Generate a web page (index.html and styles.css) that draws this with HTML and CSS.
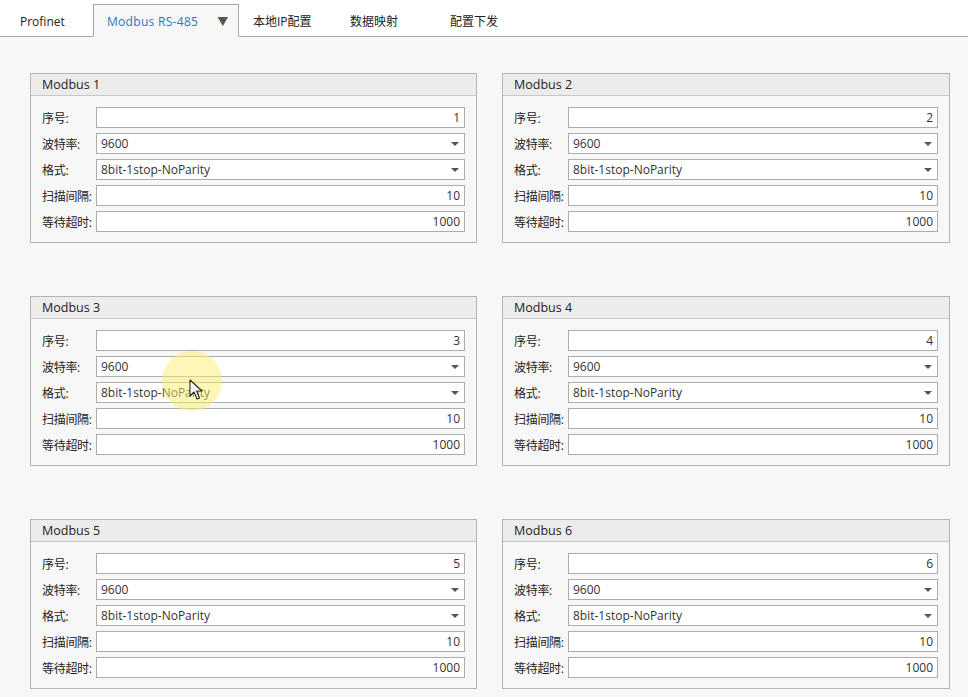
FILE: index.html
```html
<!DOCTYPE html>
<html lang="zh">
<head>
<meta charset="utf-8">
<title>Modbus RS-485</title>
<link rel="stylesheet" href="styles.css">
</head>
<body>
<div class="tabs">
  <div class="tab t-prof">Profinet</div>
  <div class="tab active">Modbus RS-485<span class="tab-caret">&#9660;</span></div>
  <div class="tab t-ip">本地IP配置</div>
  <div class="tab t-map">数据映射</div>
  <div class="tab t-dl">配置下发</div>
</div>
<div class="content">
  <div class="grid">
    <section class="panel">
      <div class="panel-head">Modbus 1</div>
      <div class="panel-body">
        <div class="row"><span class="lbl">序号:</span><div class="field num">1</div></div>
        <div class="row"><span class="lbl">波特率:</span><div class="field sel">9600<span class="arr"></span></div></div>
        <div class="row"><span class="lbl">格式:</span><div class="field sel">8bit-1stop-NoParity<span class="arr"></span></div></div>
        <div class="row"><span class="lbl">扫描间隔:</span><div class="field num">10</div></div>
        <div class="row"><span class="lbl">等待超时:</span><div class="field num">1000</div></div>
      </div>
    </section>
    <section class="panel">
      <div class="panel-head">Modbus 2</div>
      <div class="panel-body">
        <div class="row"><span class="lbl">序号:</span><div class="field num">2</div></div>
        <div class="row"><span class="lbl">波特率:</span><div class="field sel">9600<span class="arr"></span></div></div>
        <div class="row"><span class="lbl">格式:</span><div class="field sel">8bit-1stop-NoParity<span class="arr"></span></div></div>
        <div class="row"><span class="lbl">扫描间隔:</span><div class="field num">10</div></div>
        <div class="row"><span class="lbl">等待超时:</span><div class="field num">1000</div></div>
      </div>
    </section>
    <section class="panel">
      <div class="panel-head">Modbus 3</div>
      <div class="panel-body">
        <div class="row"><span class="lbl">序号:</span><div class="field num">3</div></div>
        <div class="row"><span class="lbl">波特率:</span><div class="field sel">9600<span class="arr"></span></div></div>
        <div class="row"><span class="lbl">格式:</span><div class="field sel">8bit-1stop-NoParity<span class="arr"></span></div></div>
        <div class="row"><span class="lbl">扫描间隔:</span><div class="field num">10</div></div>
        <div class="row"><span class="lbl">等待超时:</span><div class="field num">1000</div></div>
      </div>
      <div class="pointer">
        <span class="halo"></span>
        <svg class="cursor" width="14" height="22" viewBox="0 0 14 22"><path d="M1 1 L1 17 L5 13 L8 20 L10.5 19 L7.5 12 L13 12 Z" fill="#fff" stroke="#222" stroke-width="1.1" stroke-linejoin="round"/></svg>
      </div>
    </section>
    <section class="panel">
      <div class="panel-head">Modbus 4</div>
      <div class="panel-body">
        <div class="row"><span class="lbl">序号:</span><div class="field num">4</div></div>
        <div class="row"><span class="lbl">波特率:</span><div class="field sel">9600<span class="arr"></span></div></div>
        <div class="row"><span class="lbl">格式:</span><div class="field sel">8bit-1stop-NoParity<span class="arr"></span></div></div>
        <div class="row"><span class="lbl">扫描间隔:</span><div class="field num">10</div></div>
        <div class="row"><span class="lbl">等待超时:</span><div class="field num">1000</div></div>
      </div>
    </section>
    <section class="panel">
      <div class="panel-head">Modbus 5</div>
      <div class="panel-body">
        <div class="row"><span class="lbl">序号:</span><div class="field num">5</div></div>
        <div class="row"><span class="lbl">波特率:</span><div class="field sel">9600<span class="arr"></span></div></div>
        <div class="row"><span class="lbl">格式:</span><div class="field sel">8bit-1stop-NoParity<span class="arr"></span></div></div>
        <div class="row"><span class="lbl">扫描间隔:</span><div class="field num">10</div></div>
        <div class="row"><span class="lbl">等待超时:</span><div class="field num">1000</div></div>
      </div>
    </section>
    <section class="panel">
      <div class="panel-head">Modbus 6</div>
      <div class="panel-body">
        <div class="row"><span class="lbl">序号:</span><div class="field num">6</div></div>
        <div class="row"><span class="lbl">波特率:</span><div class="field sel">9600<span class="arr"></span></div></div>
        <div class="row"><span class="lbl">格式:</span><div class="field sel">8bit-1stop-NoParity<span class="arr"></span></div></div>
        <div class="row"><span class="lbl">扫描间隔:</span><div class="field num">10</div></div>
        <div class="row"><span class="lbl">等待超时:</span><div class="field num">1000</div></div>
      </div>
    </section>
  </div>
</div>
</body>
</html>
```
FILE: styles.css
```css
html, body {
  margin: 0;
  padding: 0;
}
body {
  width: 968px;
  height: 697px;
  overflow: hidden;
  background: #f7f7f7;
  font-family: "Open Sans", "Noto Sans CJK SC", sans-serif;
  font-size: 12px;
  color: #333;
}
.tabs {
  display: flex;
  align-items: flex-end;
  height: 36px;
  background: #fff;
  border-bottom: 1px solid #a9a9a9;
}
.tab {
  height: 33px;
  line-height: 30px;
  padding: 3px 0 0 14px;
  box-sizing: border-box;
  color: #222;
  white-space: nowrap;
  margin-bottom: -1px;
  flex: none;
}
.t-prof { width: 93px; padding-left: 20px; }
.tab.active {
  width: 146px;
  border: 1px solid #a9a9a9;
  border-bottom: 1px solid #f7f7f7;
  background: #f7f7f7;
  color: #2f76c0;
  padding-left: 13px;
  padding-top: 2px;
  letter-spacing: 0.3px;
}
.tab-caret {
  color: #555;
  font-size: 11px;
  margin-left: 19px;
  letter-spacing: 0;
}
.t-ip { width: 97px; }
.t-map { width: 100px; }
.t-dl { width: 100px; }
.content {
  padding: 36px 18px 0 30px;
}
.grid {
  display: grid;
  grid-template-columns: 447px 448px;
  column-gap: 25px;
  row-gap: 53px;
}
.panel {
  position: relative;
  border: 1px solid #b4b4b4;
  background: #f7f7f7;
  height: 170px;
  box-sizing: border-box;
}
.panel-head {
  height: 21px;
  line-height: 22px;
  background: #ececec;
  border-bottom: 1px solid #c8c8c8;
  padding-left: 11px;
  color: #222;
  font-size: 12.5px;
}
.panel-body {
  display: flex;
  flex-direction: column;
  gap: 5px;
  padding: 11px 11px 0 11px;
}
.row {
  display: flex;
  align-items: center;
  height: 21px;
}
.lbl {
  width: 54px;
  flex: none;
  color: #222;
  white-space: nowrap;
  letter-spacing: -0.3px;
}
.field {
  flex: 1;
  height: 21px;
  box-sizing: border-box;
  border: 1px solid #acacac;
  background: #fff;
  line-height: 19px;
  padding: 0 4px;
  color: #333;
  position: relative;
}
.num { text-align: right; }
.sel { padding-left: 4px; }
.arr {
  position: absolute;
  right: 5px;
  top: 8px;
  width: 0;
  height: 0;
  border-left: 4px solid transparent;
  border-right: 4px solid transparent;
  border-top: 4px solid #555;
}
.pointer {
  position: absolute;
  left: 131px;
  top: 54px;
  width: 60px;
  height: 60px;
}
.halo {
  position: absolute;
  left: 0;
  top: 0;
  width: 60px;
  height: 60px;
  border-radius: 50%;
  background: rgba(250, 240, 110, 0.5);
}
.cursor {
  position: absolute;
  left: 27px;
  top: 28px;
}
```
